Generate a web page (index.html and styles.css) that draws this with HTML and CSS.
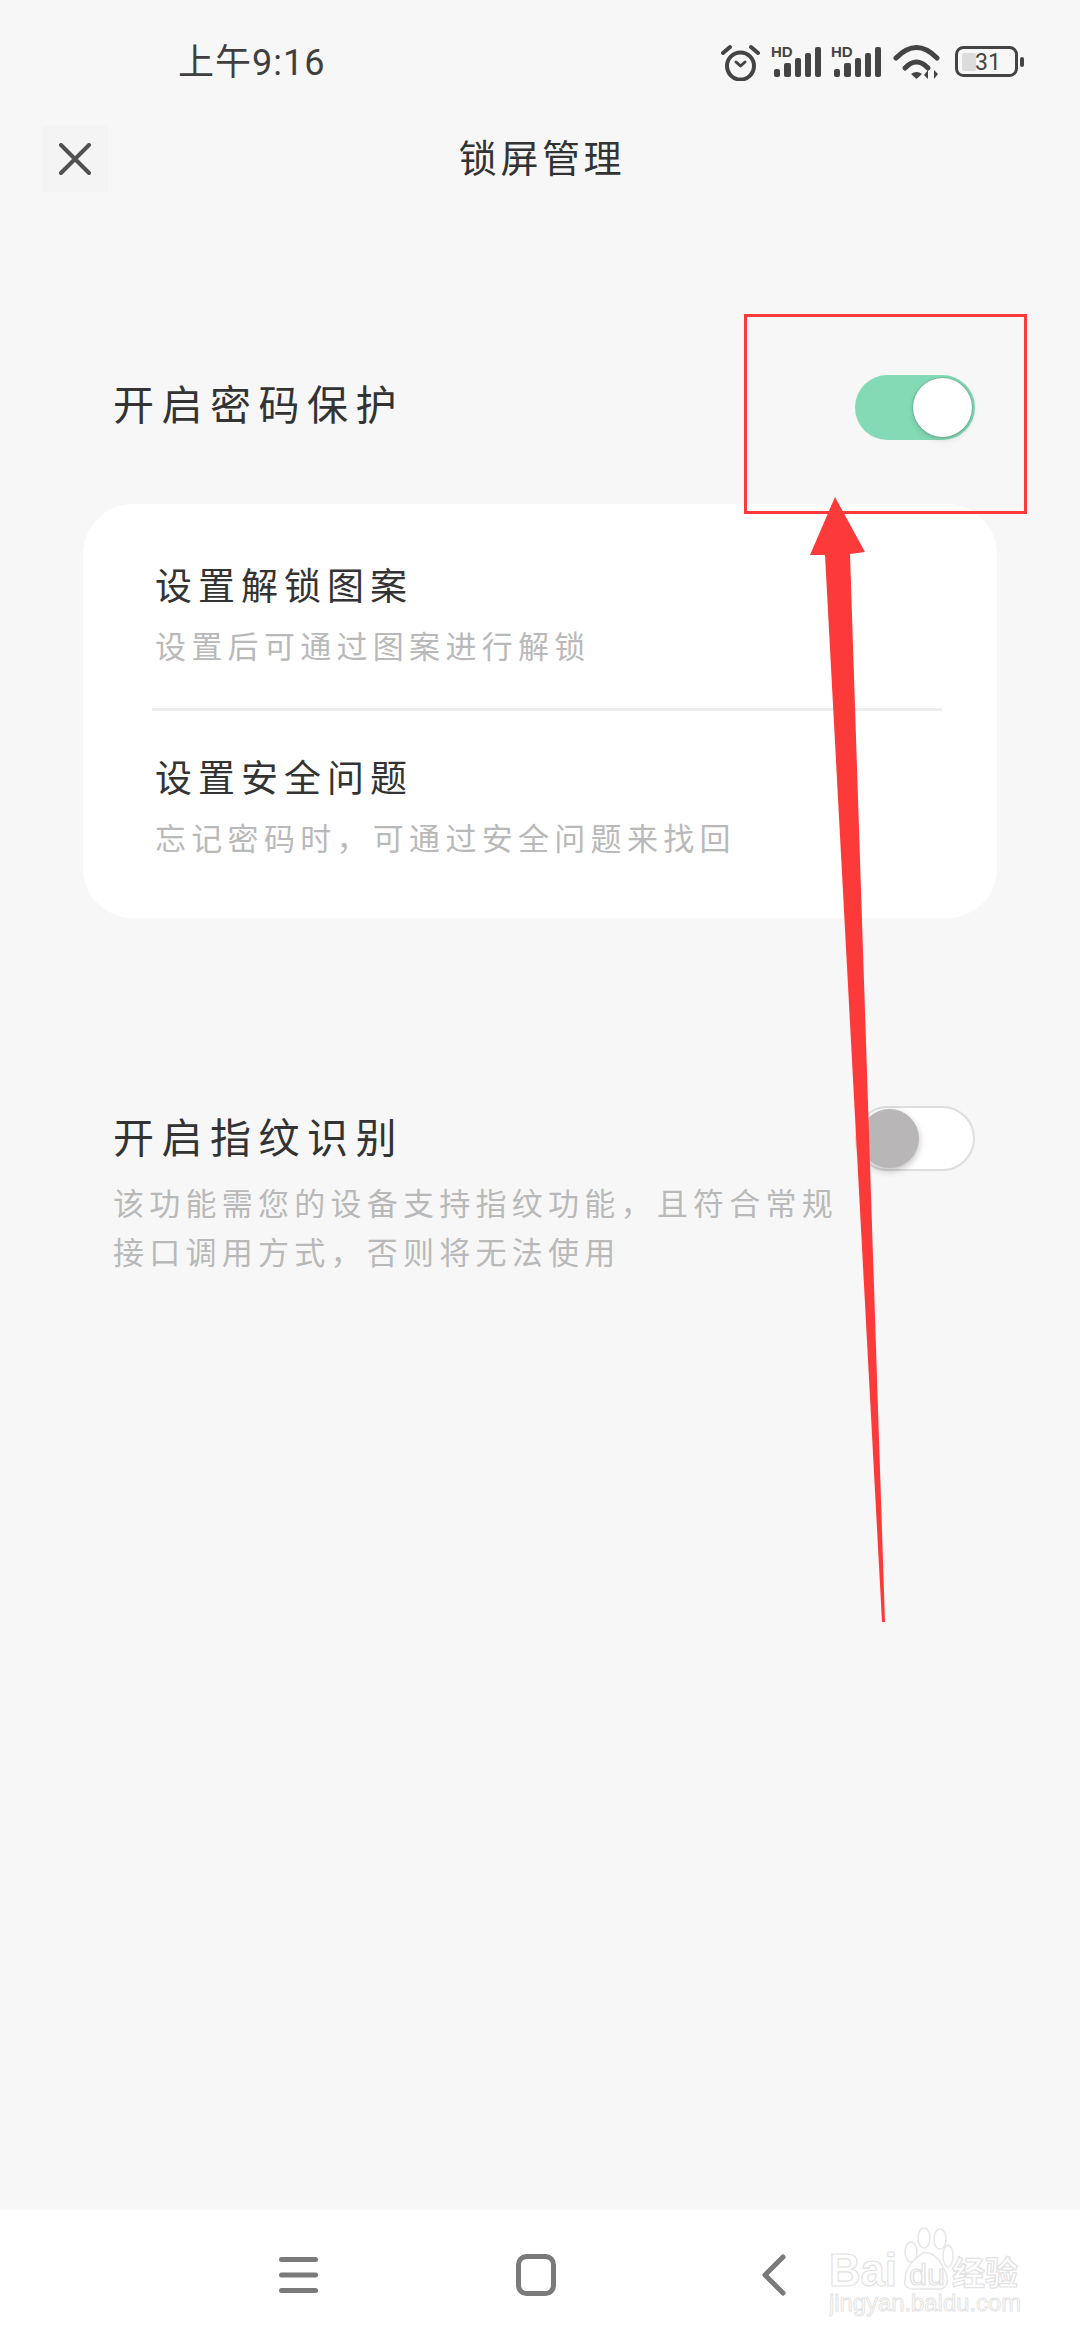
FILE: index.html
```html
<!DOCTYPE html>
<html lang="zh-CN">
<head>
    <meta charset="UTF-8">
    <meta name="viewport" content="width=device-width, initial-scale=1.0">
    <title>锁屏管理</title>
    <link rel="stylesheet" href="styles.css">
</head>
<body>
<div class="page">
    <div class="status-bar">
        <span class="time">上午9:16</span>
        <div class="status-icons">
            <svg class="ico-alarm" width="40" height="37" viewBox="0 0 40 37" fill="none" stroke="#444" stroke-width="4" stroke-linecap="round" stroke-linejoin="round">
                <circle cx="19.5" cy="22" r="13.5"/>
                <path d="M2 9 L9 3 M37 9 L30 3"/>
                <path d="M15 18 L19.5 22 L24 18" stroke-width="3"/>
            </svg>
            <svg class="ico-signal" width="50" height="38" viewBox="0 -3 50 38" fill="#444">
                <text x="0" y="11" class="hd">HD</text>
                <rect x="3" y="23" width="6" height="8" rx="2"/>
                <rect x="13" y="17" width="7" height="14" rx="2"/>
                <rect x="24" y="12" width="6" height="19" rx="2"/>
                <rect x="34" y="7" width="6" height="24" rx="2"/>
                <rect x="44" y="1" width="6" height="30" rx="2"/>
            </svg>
            <svg class="ico-signal" width="50" height="38" viewBox="0 -3 50 38" fill="#444">
                <text x="0" y="11" class="hd">HD</text>
                <rect x="3" y="23" width="6" height="8" rx="2"/>
                <rect x="13" y="17" width="7" height="14" rx="2"/>
                <rect x="24" y="12" width="6" height="19" rx="2"/>
                <rect x="34" y="7" width="6" height="24" rx="2"/>
                <rect x="44" y="1" width="6" height="30" rx="2"/>
            </svg>
            <svg class="ico-wifi" width="48" height="34" viewBox="0 0 48 34" fill="none" stroke="#444" stroke-width="5" stroke-linecap="round">
                <path d="M3 13 Q23.5 -8 44 13"/>
                <path d="M12 23 Q23.5 11 35 23"/>
                <path d="M18 29 Q23.5 25 29 29 L23.5 34 Z" fill="#444" stroke="none"/>
                <path d="M35 25 V34 L31 30 Z M41 34 V25 L45 29 Z" fill="#444" stroke="none"/>
            </svg>
            <svg class="ico-battery" width="70" height="32" viewBox="0 0 70 32">
                <rect x="1.5" y="1.5" width="60" height="28" rx="7" fill="none" stroke="#444" stroke-width="3"/>
                <rect x="7" y="7" width="14" height="18" rx="2" fill="#dcdcdc"/>
                <text x="20" y="24" class="batt-num">31</text>
                <rect x="65" y="11" width="4" height="10" rx="2" fill="#444"/>
            </svg>
        </div>
    </div>

    <div class="top-bar">
        <div class="close-btn">
            <svg width="32" height="32" viewBox="0 0 32 32" fill="none" stroke="#505050" stroke-width="4" stroke-linecap="round">
                <path d="M2 2 L30 30 M30 2 L2 30"/>
            </svg>
        </div>
        <div class="page-title">锁屏管理</div>
        <div class="top-spacer"></div>
    </div>

    <div class="option option-lock">
        <div class="option-title">开启密码保护</div>
        <div class="switch switch-on"><span class="knob"></span></div>
    </div>

    <div class="card">
        <div class="card-item">
            <div class="item-title">设置解锁图案</div>
            <div class="item-sub">设置后可通过图案进行解锁</div>
        </div>
        <div class="card-line"></div>
        <div class="card-item card-item-last">
            <div class="item-title">设置安全问题</div>
            <div class="item-sub">忘记密码时，可通过安全问题来找回</div>
        </div>
    </div>

    <div class="option option-finger">
        <div class="option-text">
            <div class="option-title">开启指纹识别</div>
            <div class="option-desc">该功能需您的设备支持指纹功能，且符合常规接口调用方式，否则将无法使用</div>
        </div>
        <div class="switch switch-off"><span class="knob"></span></div>
    </div>

    <div class="nav-bar">
        <svg class="nav-menu" width="39" height="42" viewBox="0 0 39 42" fill="#7a7a7a">
            <rect x="0" y="3" width="39" height="5" rx="2.5"/>
            <rect x="0" y="18.5" width="39" height="5" rx="2.5"/>
            <rect x="0" y="34" width="39" height="5" rx="2.5"/>
        </svg>
        <svg class="nav-home" width="40" height="42" viewBox="0 0 40 42" fill="none" stroke="#7a7a7a" stroke-width="5">
            <rect x="2.5" y="2.5" width="35" height="37" rx="8"/>
        </svg>
        <svg class="nav-back" width="24" height="42" viewBox="0 0 24 42" fill="none" stroke="#7a7a7a" stroke-width="5" stroke-linecap="round" stroke-linejoin="round">
            <path d="M21 3 L3 21 L21 39"/>
        </svg>
    </div>

    <!-- marca de agua -->
    <svg class="watermark" width="200" height="95" viewBox="0 0 200 95">
        <g class="wm-paw">
            <ellipse cx="95" cy="13" rx="6" ry="10"/>
            <ellipse cx="111" cy="14" rx="6" ry="10"/>
            <ellipse cx="82" cy="27" rx="6" ry="10"/>
            <ellipse cx="119" cy="31" rx="5" ry="11"/>
            <path d="M76 55 Q76 40 94 28 Q106 26 114 42 Q124 60 112 64 L82 64 Q74 62 76 55 Z"/>
        </g>
        <text class="wm-big" x="0" y="61" textLength="68" lengthAdjust="spacingAndGlyphs">Bai</text>
        <text class="wm-du" x="80" y="60" textLength="36" lengthAdjust="spacingAndGlyphs">du</text>
        <text class="wm-cn" x="123" y="60" textLength="66" lengthAdjust="spacingAndGlyphs">经验</text>
        <text class="wm-url" x="0" y="86" textLength="192" lengthAdjust="spacingAndGlyphs">jingyan.baidu.com</text>
    </svg>

    <!-- anotacion roja encima de la captura -->
    <svg class="annotation" width="1080" height="2340" viewBox="0 0 1080 2340">
        <rect x="745.5" y="315.5" width="280" height="197" fill="none" stroke="#fd3a3a" stroke-width="3"/>
        <polygon points="835,497 865,552 850,554 885,1622 882,1622 825,555 810,555" fill="#fd3a3a"/>
    </svg>
</div>
</body>
</html>
```

FILE: styles.css
```css
* { box-sizing: border-box; }

html, body {
    margin: 0;
    padding: 0;
}

body {
    font-family: "Noto Sans CJK SC", "Noto Sans", sans-serif;
    background-color: #f7f7f7;
    color: #333;
}

.page {
    position: relative;
    width: 1080px;
    height: 2340px;
    overflow: hidden;
    display: flex;
    flex-direction: column;
}

/* barra de estado */
.status-bar {
    display: flex;
    align-items: center;
    height: 44px;
    margin-top: 40px;
    padding: 0 55px 0 178px;
}

.time {
    font-family: Roboto, "Noto Sans CJK SC", sans-serif;
    font-size: 36px;
    line-height: 44px;
    letter-spacing: 1px;
    padding-top: 2px;
    color: #3f3f3f;
}

.status-icons {
    margin-left: auto;
    display: flex;
    align-items: center;
    gap: 10px;
}

.ico-wifi { margin-left: 2px; }
.ico-battery { margin-left: 4px; }

.hd {
    font-family: "Liberation Sans", sans-serif;
    font-size: 15px;
    font-weight: bold;
}

.batt-num {
    font-family: Roboto, sans-serif;
    font-size: 23px;
    fill: #444;
}

/* cabecera */
.top-bar {
    display: flex;
    align-items: center;
    height: 66px;
    margin-top: 42px;
    padding: 0 42px;
}

.close-btn {
    width: 66px;
    height: 66px;
    background-color: #f4f4f4;
    display: flex;
    align-items: center;
    justify-content: center;
}

.page-title {
    flex: 1;
    text-align: center;
    font-size: 38px;
    line-height: 50px;
    letter-spacing: 3.6px;
    padding: 0 0 6px 4px;
    color: #333;
}

.top-spacer { width: 66px; }

/* opciones */
.option {
    display: flex;
    justify-content: space-between;
    padding: 0 105px 0 113px;
}

.option-lock {
    align-items: center;
    margin-top: 183px;
}

.option-lock .option-title { padding-bottom: 12px; }

.option-finger {
    align-items: flex-start;
    margin-top: 188px;
}

.option-title {
    font-size: 41px;
    line-height: 50px;
    letter-spacing: 7.5px;
    color: #333;
}

.option-text {
    width: 725px;
    padding-top: 4px;
}

.option-desc {
    margin-top: 17px;
    font-size: 31px;
    line-height: 49px;
    letter-spacing: 5.25px;
    color: #b9b9b9;
}

/* interruptores */
.switch {
    width: 120px;
    height: 65px;
    border-radius: 33px;
    display: flex;
    align-items: center;
    flex-shrink: 0;
}

.switch-on {
    background-color: #84dab4;
    justify-content: flex-end;
    padding-right: 3px;
}

.switch-on .knob {
    background-color: #fff;
    box-shadow: 0 0 2px rgba(0, 0, 0, 0.4), 0 3px 6px rgba(0, 0, 0, 0.12);
}

.switch-off {
    background-color: #fff;
    border: 2px solid #dedede;
    padding-left: 3px;
}

.switch-off .knob {
    background-color: #b8b6b7;
    box-shadow: 0 3px 7px rgba(0, 0, 0, 0.25);
}

.knob {
    width: 59px;
    height: 59px;
    border-radius: 50%;
}

/* tarjeta */
.card {
    margin: 64px 83px 0;
    height: 414px;
    background-color: #fff;
    border-radius: 50px;
}

.card-item {
    height: 204px;
    padding: 55px 0 0 72px;
}

.card-item-last {
    height: 207px;
    padding-top: 40px;
}

.item-title {
    font-size: 37px;
    line-height: 50px;
    letter-spacing: 6px;
    color: #333;
}

.item-sub {
    margin-top: 14px;
    font-size: 31px;
    line-height: 44px;
    letter-spacing: 5.3px;
    color: #b9b9b9;
}

.card-line {
    height: 3px;
    width: 790px;
    margin-left: 69px;
    background-color: #eee;
}

/* barra de navegacion */
.nav-bar {
    margin-top: auto;
    height: 130px;
    background-color: #fff;
    display: flex;
    align-items: flex-start;
    padding: 44px 0 0 279px;
}

.nav-home { margin-left: 198px; }
.nav-back { margin-left: 206px; }

/* marca de agua */
.watermark {
    position: absolute;
    left: 829px;
    top: 2225px;
}

.wm-paw {
    fill: #fff;
    stroke: #e6e6e6;
    stroke-width: 1.5;
}

.wm-big, .wm-du, .wm-cn, .wm-url {
    fill: #fff;
    stroke: #e2e2e2;
    stroke-width: 1.2;
    font-family: "Liberation Sans", "Noto Sans CJK SC", sans-serif;
}

.wm-big { font-size: 46px; font-weight: bold; }
.wm-du { font-size: 30px; }
.wm-cn { font-size: 33px; font-weight: bold; }
.wm-url { font-size: 24px; stroke-width: 0.9; }

/* anotacion */
.annotation {
    position: absolute;
    left: 0;
    top: 0;
}
```
